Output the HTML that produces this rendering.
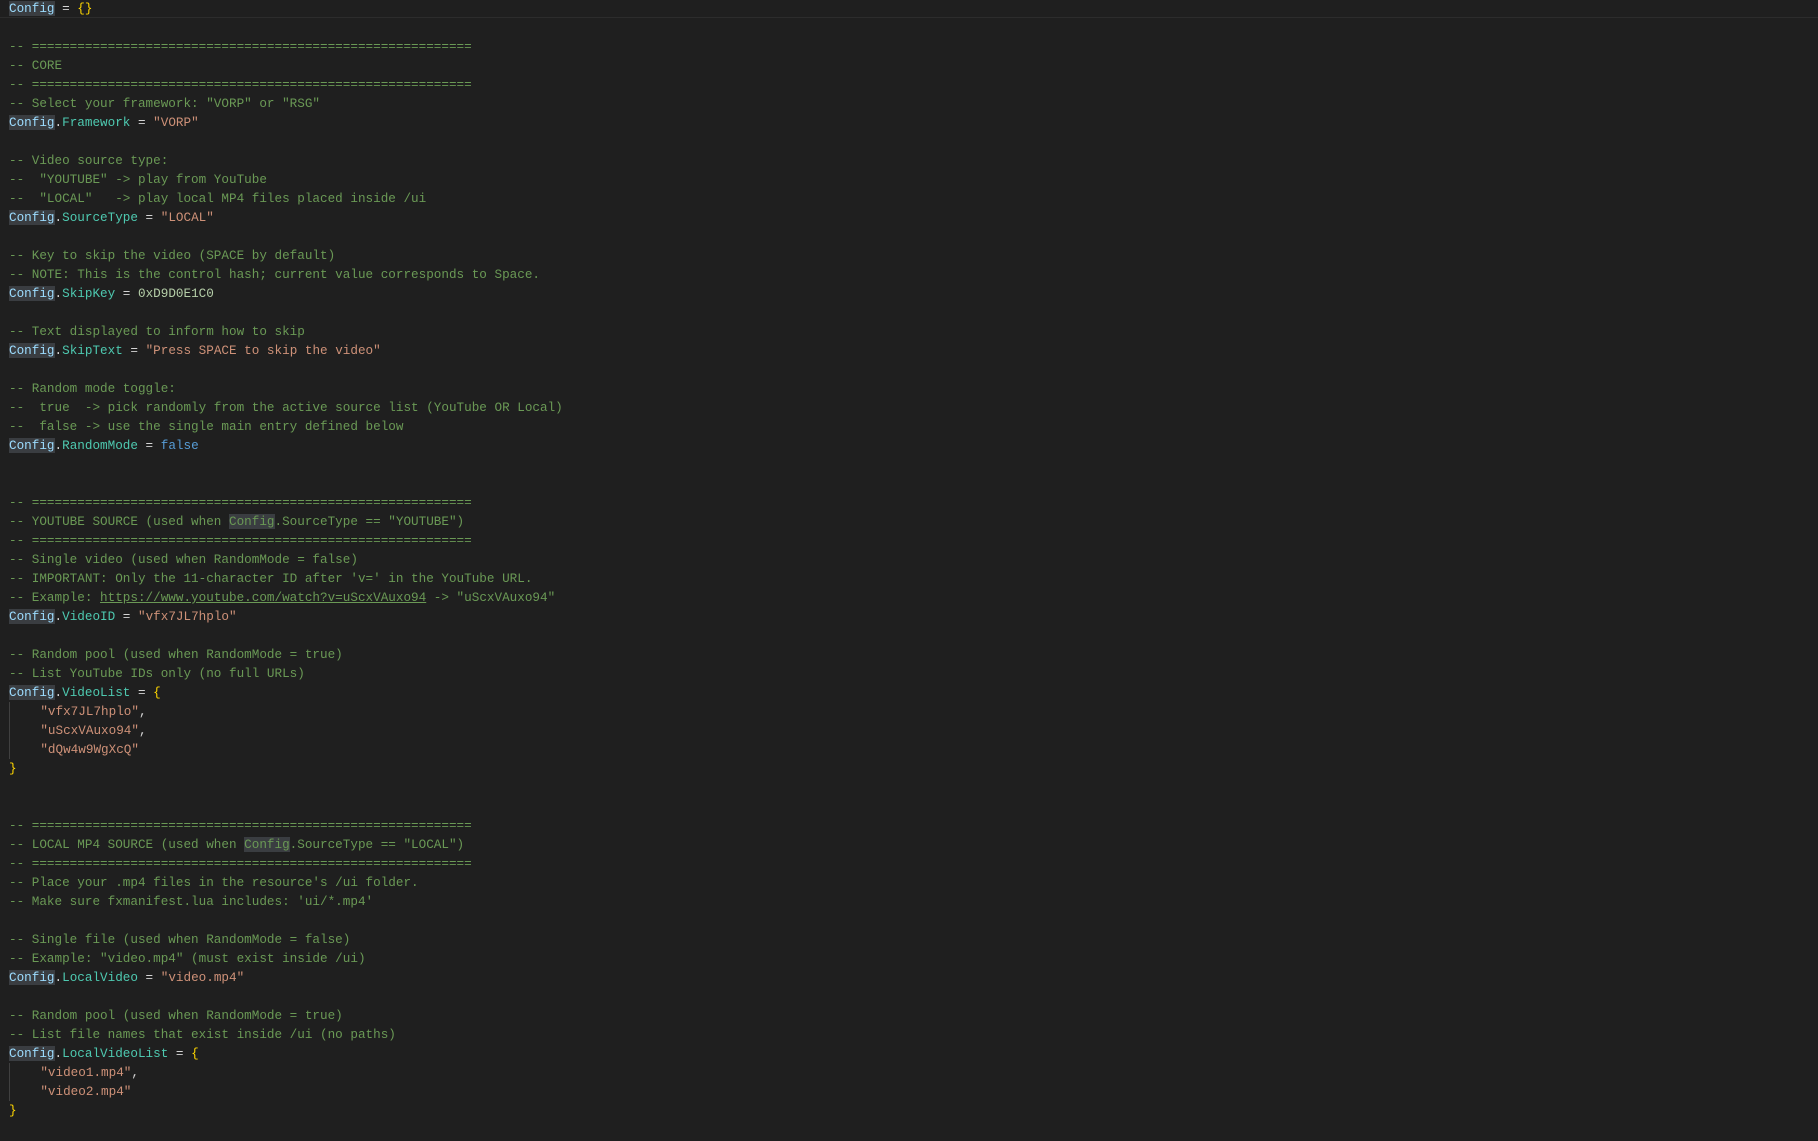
<!DOCTYPE html>
<html><head><meta charset="utf-8"><style>
html,body{margin:0;padding:0;background:#1f1f1f;width:1818px;height:1141px;overflow:hidden}
pre{margin:0;padding:0 0 0 9px;position:relative;top:-1px;font-family:"Liberation Mono","DejaVu Sans Mono",monospace;font-size:12.65px;line-height:19px;color:#d4d4d4;white-space:pre}
.c{color:#6a9955}.k{color:#9cdcfe;background:#3a3d41}.f{color:#4ec9b0}.s{color:#ce9178}.b{color:#ffd700}.n{color:#b5cea8}.v{color:#569cd6}
.u{text-decoration:underline}
.cur{position:absolute;left:0;top:17px;width:1818px;height:1px;background:#2c2c2c}
.g{display:inline-block;border-left:1px solid #404040}
</style></head><body><div class="cur"></div><pre><span class="k">Config</span> = <span class="b">{}</span>

<span class="c">-- ==========================================================</span>
<span class="c">-- CORE</span>
<span class="c">-- ==========================================================</span>
<span class="c">-- Select your framework: "VORP" or "RSG"</span>
<span class="k">Config</span>.<span class="f">Framework</span> = <span class="s">"VORP"</span>

<span class="c">-- Video source type:</span>
<span class="c">--  "YOUTUBE" -&gt; play from YouTube</span>
<span class="c">--  "LOCAL"   -&gt; play local MP4 files placed inside /ui</span>
<span class="k">Config</span>.<span class="f">SourceType</span> = <span class="s">"LOCAL"</span>

<span class="c">-- Key to skip the video (SPACE by default)</span>
<span class="c">-- NOTE: This is the control hash; current value corresponds to Space.</span>
<span class="k">Config</span>.<span class="f">SkipKey</span> = <span class="n">0xD9D0E1C0</span>

<span class="c">-- Text displayed to inform how to skip</span>
<span class="k">Config</span>.<span class="f">SkipText</span> = <span class="s">"Press SPACE to skip the video"</span>

<span class="c">-- Random mode toggle:</span>
<span class="c">--  true  -&gt; pick randomly from the active source list (YouTube OR Local)</span>
<span class="c">--  false -&gt; use the single main entry defined below</span>
<span class="k">Config</span>.<span class="f">RandomMode</span> = <span class="v">false</span>


<span class="c">-- ==========================================================</span>
<span class="c">-- YOUTUBE SOURCE (used when <span class="k" style="color:#6a9955">Config</span>.SourceType == "YOUTUBE")</span>
<span class="c">-- ==========================================================</span>
<span class="c">-- Single video (used when RandomMode = false)</span>
<span class="c">-- IMPORTANT: Only the 11-character ID after 'v=' in the YouTube URL.</span>
<span class="c">-- Example: <span class="u">https://www.youtube.com/watch?v=uScxVAuxo94</span> -&gt; "uScxVAuxo94"</span>
<span class="k">Config</span>.<span class="f">VideoID</span> = <span class="s">"vfx7JL7hplo"</span>

<span class="c">-- Random pool (used when RandomMode = true)</span>
<span class="c">-- List YouTube IDs only (no full URLs)</span>
<span class="k">Config</span>.<span class="f">VideoList</span> = <span class="b">{</span>
<span class="g">    </span><span class="s">"vfx7JL7hplo"</span>,
<span class="g">    </span><span class="s">"uScxVAuxo94"</span>,
<span class="g">    </span><span class="s">"dQw4w9WgXcQ"</span>
<span class="b">}</span>


<span class="c">-- ==========================================================</span>
<span class="c">-- LOCAL MP4 SOURCE (used when <span class="k" style="color:#6a9955">Config</span>.SourceType == "LOCAL")</span>
<span class="c">-- ==========================================================</span>
<span class="c">-- Place your .mp4 files in the resource's /ui folder.</span>
<span class="c">-- Make sure fxmanifest.lua includes: 'ui/*.mp4'</span>

<span class="c">-- Single file (used when RandomMode = false)</span>
<span class="c">-- Example: "video.mp4" (must exist inside /ui)</span>
<span class="k">Config</span>.<span class="f">LocalVideo</span> = <span class="s">"video.mp4"</span>

<span class="c">-- Random pool (used when RandomMode = true)</span>
<span class="c">-- List file names that exist inside /ui (no paths)</span>
<span class="k">Config</span>.<span class="f">LocalVideoList</span> = <span class="b">{</span>
<span class="g">    </span><span class="s">"video1.mp4"</span>,
<span class="g">    </span><span class="s">"video2.mp4"</span>
<span class="b">}</span>
</pre></body></html>
